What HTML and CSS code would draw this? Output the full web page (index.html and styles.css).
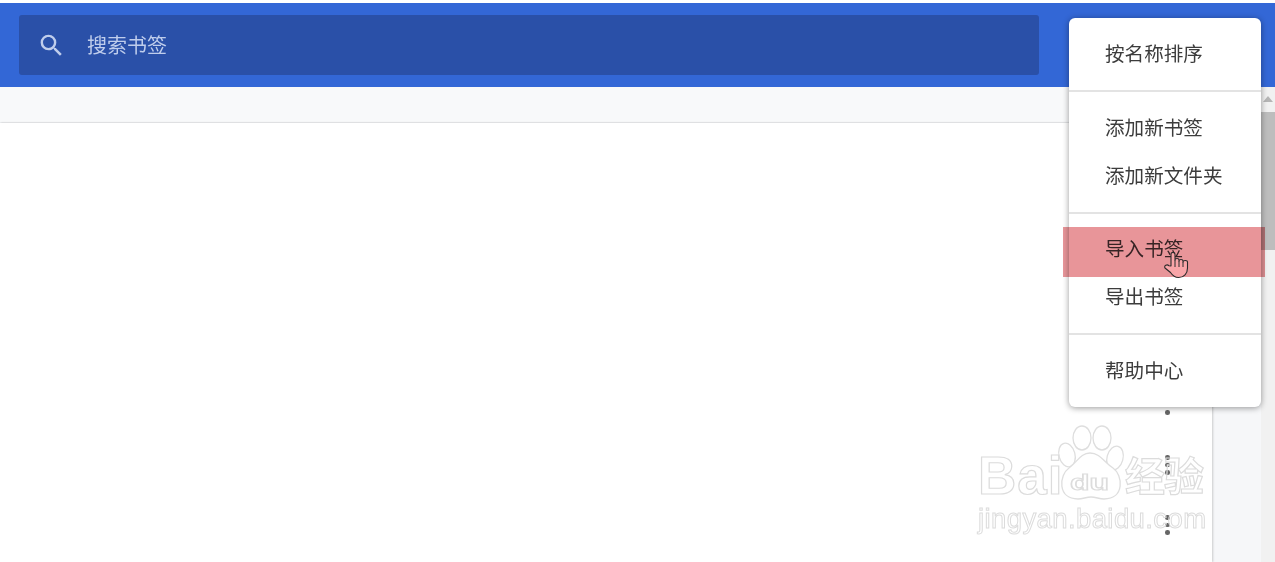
FILE: index.html
```html
<!DOCTYPE html>
<html lang="zh-CN">
<head>
<meta charset="utf-8">
<title>书签</title>
<link rel="stylesheet" href="styles.css">
</head>
<body>
<div class="page">
  <header class="topbar">
    <div class="search">
      <svg class="search-icon" viewBox="0 0 24 24" width="29" height="29"><path fill="currentColor" d="M15.5 14h-.79l-.28-.27A6.47 6.47 0 0 0 16 9.5 6.5 6.5 0 1 0 9.5 16c1.61 0 3.09-.59 4.23-1.57l.27.28v.79l5 4.99L20.49 19l-4.99-5zm-6 0C7.01 14 5 11.99 5 9.5S7.01 5 9.5 5 14 7.01 14 9.5 11.99 14 9.5 14z"/></svg>
      <span class="search-text">搜索书签</span>
    </div>
  </header>
  <div class="subbar"></div>
  <main class="main">
    <section class="list">
      <div class="row"><span class="kebab"><i></i><i></i><i></i></span></div>
      <div class="row"><span class="kebab"><i></i><i></i><i></i></span></div>
      <div class="row"><span class="kebab"><i></i><i></i><i></i></span></div>
      <div class="row"><span class="kebab"><i></i><i></i><i></i></span></div>
      <div class="row"><span class="kebab"><i></i><i></i><i></i></span></div>
      <div class="row"><span class="kebab"><i></i><i></i><i></i></span></div>
      <div class="row"><span class="kebab"><i></i><i></i><i></i></span></div>
    </section>
    <aside class="side"></aside>
  </main>
  <div class="scrollbar">
    <svg class="arrow" viewBox="0 0 10 6" width="10" height="6"><path d="M0 6 5 0l5 6z" fill="#b5b5b5"/></svg>
    <div class="thumb"></div>
  </div>
  <nav class="menu">
    <div class="group"><div class="item">按名称排序</div></div>
    <div class="group"><div class="item">添加新书签</div><div class="item">添加新文件夹</div></div>
    <div class="group"><div class="item">导入书签</div><div class="item">导出书签</div></div>
    <div class="group"><div class="item">帮助中心</div></div>
  </nav>
  <div class="highlight"></div>
  <svg class="cursor" viewBox="0 0 26 27" width="26" height="27">
    <path d="M7 14V2.500c0-2.800 4-2.800 4 0V8c0-2 4-2 4 0v1c0-2 4-2 4 0v1c0-2 4.500-2 4.500 0v6c0 5.500-3.500 9.500-9 9.500-4 0-6-2-8-5L1 16c-1.300-2.200 2-4.200 4-2.200z" fill="#f9a5a8" stroke="#2a2a2a" stroke-width="1.100" stroke-linejoin="round"/>
    <path d="M11 8v7M15 9v6M19 10v5" fill="none" stroke="#2a2a2a" stroke-width="1"/>
  </svg>
  <div class="watermark">
    <svg class="paw" viewBox="0 0 78 76" width="78" height="76">
      <g fill="#fff" stroke="#dedede" stroke-width="1.300">
        <ellipse cx="33" cy="13" rx="9" ry="12"/>
        <ellipse cx="53" cy="13" rx="9" ry="12"/>
        <ellipse cx="18" cy="30" rx="8" ry="12" transform="rotate(-15 18 30)"/>
        <ellipse cx="66" cy="33" rx="8" ry="12" transform="rotate(15 66 33)"/>
        <path d="M41 28c-9 0-13 9-21 15-10 7-12 31 9 31 5 0 8-2 13-2s8 2 13 2c21 0 19-24 9-31-9-6-13-15-23-15z"/>
      </g>
    </svg>
    <span class="wm-bai">Bai</span><span class="wm-du">du</span><span class="wm-cn">经验</span>
    <span class="wm-url">jingyan.baidu.com</span>
  </div>
</div>
</body>
</html>
```
FILE: styles.css
```css
* { box-sizing: border-box; }
html, body { margin: 0; height: 100%; overflow: hidden; background: #fff; }
body { font-family: "Noto Sans CJK SC", "Liberation Sans", sans-serif; }
.page {
  position: relative;
  width: 1275px;
  height: 562px;
  overflow: hidden;
  display: flex;
  flex-direction: column;
  padding-top: 3px;
  background: #fff;
}
.topbar {
  height: 84px;
  flex: none;
  background: #3367d6;
  padding: 12px 236px 12px 19px;
}
.search {
  height: 60px;
  background: #2a50a8;
  border-radius: 3px;
  display: flex;
  align-items: center;
  padding-left: 18px;
  color: #bfcdec;
}
.search-icon { flex: none; }
.search-text { margin-left: 21px; font-size: 20px; line-height: 28px; }
.subbar {
  height: 36px;
  flex: none;
  background: #f8f9fa;
  border-bottom: 1px solid #eceef0;
  margin-right: 14px;
}
.main { flex: 1; display: flex; margin-right: 14px; min-height: 0; }
.list {
  flex: 1;
  padding-top: 12px;
  padding-right: 40px;
  background: #fff;
  box-shadow: 1px 0 2px rgba(0,0,0,.18);
  position: relative;
}
.row { height: 60px; display: flex; align-items: center; justify-content: flex-end; }
.kebab { display: flex; flex-direction: column; gap: 3px; width: 9px; align-items: center; }
.kebab i { width: 4.500px; height: 4.500px; border-radius: 50%; background: #666; display: block; }
.side { width: 49px; flex: none; background: #f6f7f9; }
.scrollbar {
  position: absolute;
  right: 0;
  top: 87px;
  bottom: 0;
  width: 14px;
  background: #f1f1f1;
  display: flex;
  flex-direction: column;
  align-items: center;
}
.arrow { margin-top: 9px; flex: none; }
.thumb { width: 14px; height: 138px; margin-top: 10px; background: #bdbdbd; }
.menu {
  position: absolute;
  left: 1069px;
  top: 18px;
  width: 192px;
  height: 389px;
  background: #fff;
  border-radius: 6px;
  box-shadow: 0 1px 6px rgba(0,0,0,.4);
  padding-top: 11px;
  color: #3c3c3c;
  font-size: 19.600px;
}
.group { padding-bottom: 13px; border-bottom: 2px solid #e3e3e3; margin-bottom: 10.500px; }
.group:last-child { border-bottom: 0; margin-bottom: 0; padding-bottom: 0; }
.item { height: 48px; line-height: 48px; padding-left: 36px; white-space: nowrap; }
.highlight {
  position: absolute;
  left: 1063px;
  top: 227px;
  width: 202px;
  height: 50px;
  background: #e89599;
  mix-blend-mode: multiply;
}
.cursor { position: absolute; left: 1164px; top: 252px; }
.watermark { position: absolute; left: 977px; top: 425px; width: 232px; height: 115px; color: transparent; }
.paw { position: absolute; left: 72px; top: 0; }
.watermark span { position: absolute; -webkit-text-stroke: 1.200px #dcdcdc; font-family: "Liberation Sans", sans-serif; line-height: 1; }
.watermark .wm-bai { left: 1px; top: 24px; font-size: 53px; font-weight: 700; letter-spacing: 1px; }
.watermark .wm-du { left: 93px; top: 47px; font-size: 22px; font-weight: 700; transform: scaleX(1.45); transform-origin: left top; }
.watermark .wm-cn { left: 148px; top: 29px; font-size: 40px; font-weight: 700; letter-spacing: -1px; font-family: "Noto Sans CJK SC", sans-serif; }
.watermark .wm-url { left: 1px; top: 80px; font-size: 27.500px; letter-spacing: .400px; -webkit-text-stroke-width: 1px; }
```
